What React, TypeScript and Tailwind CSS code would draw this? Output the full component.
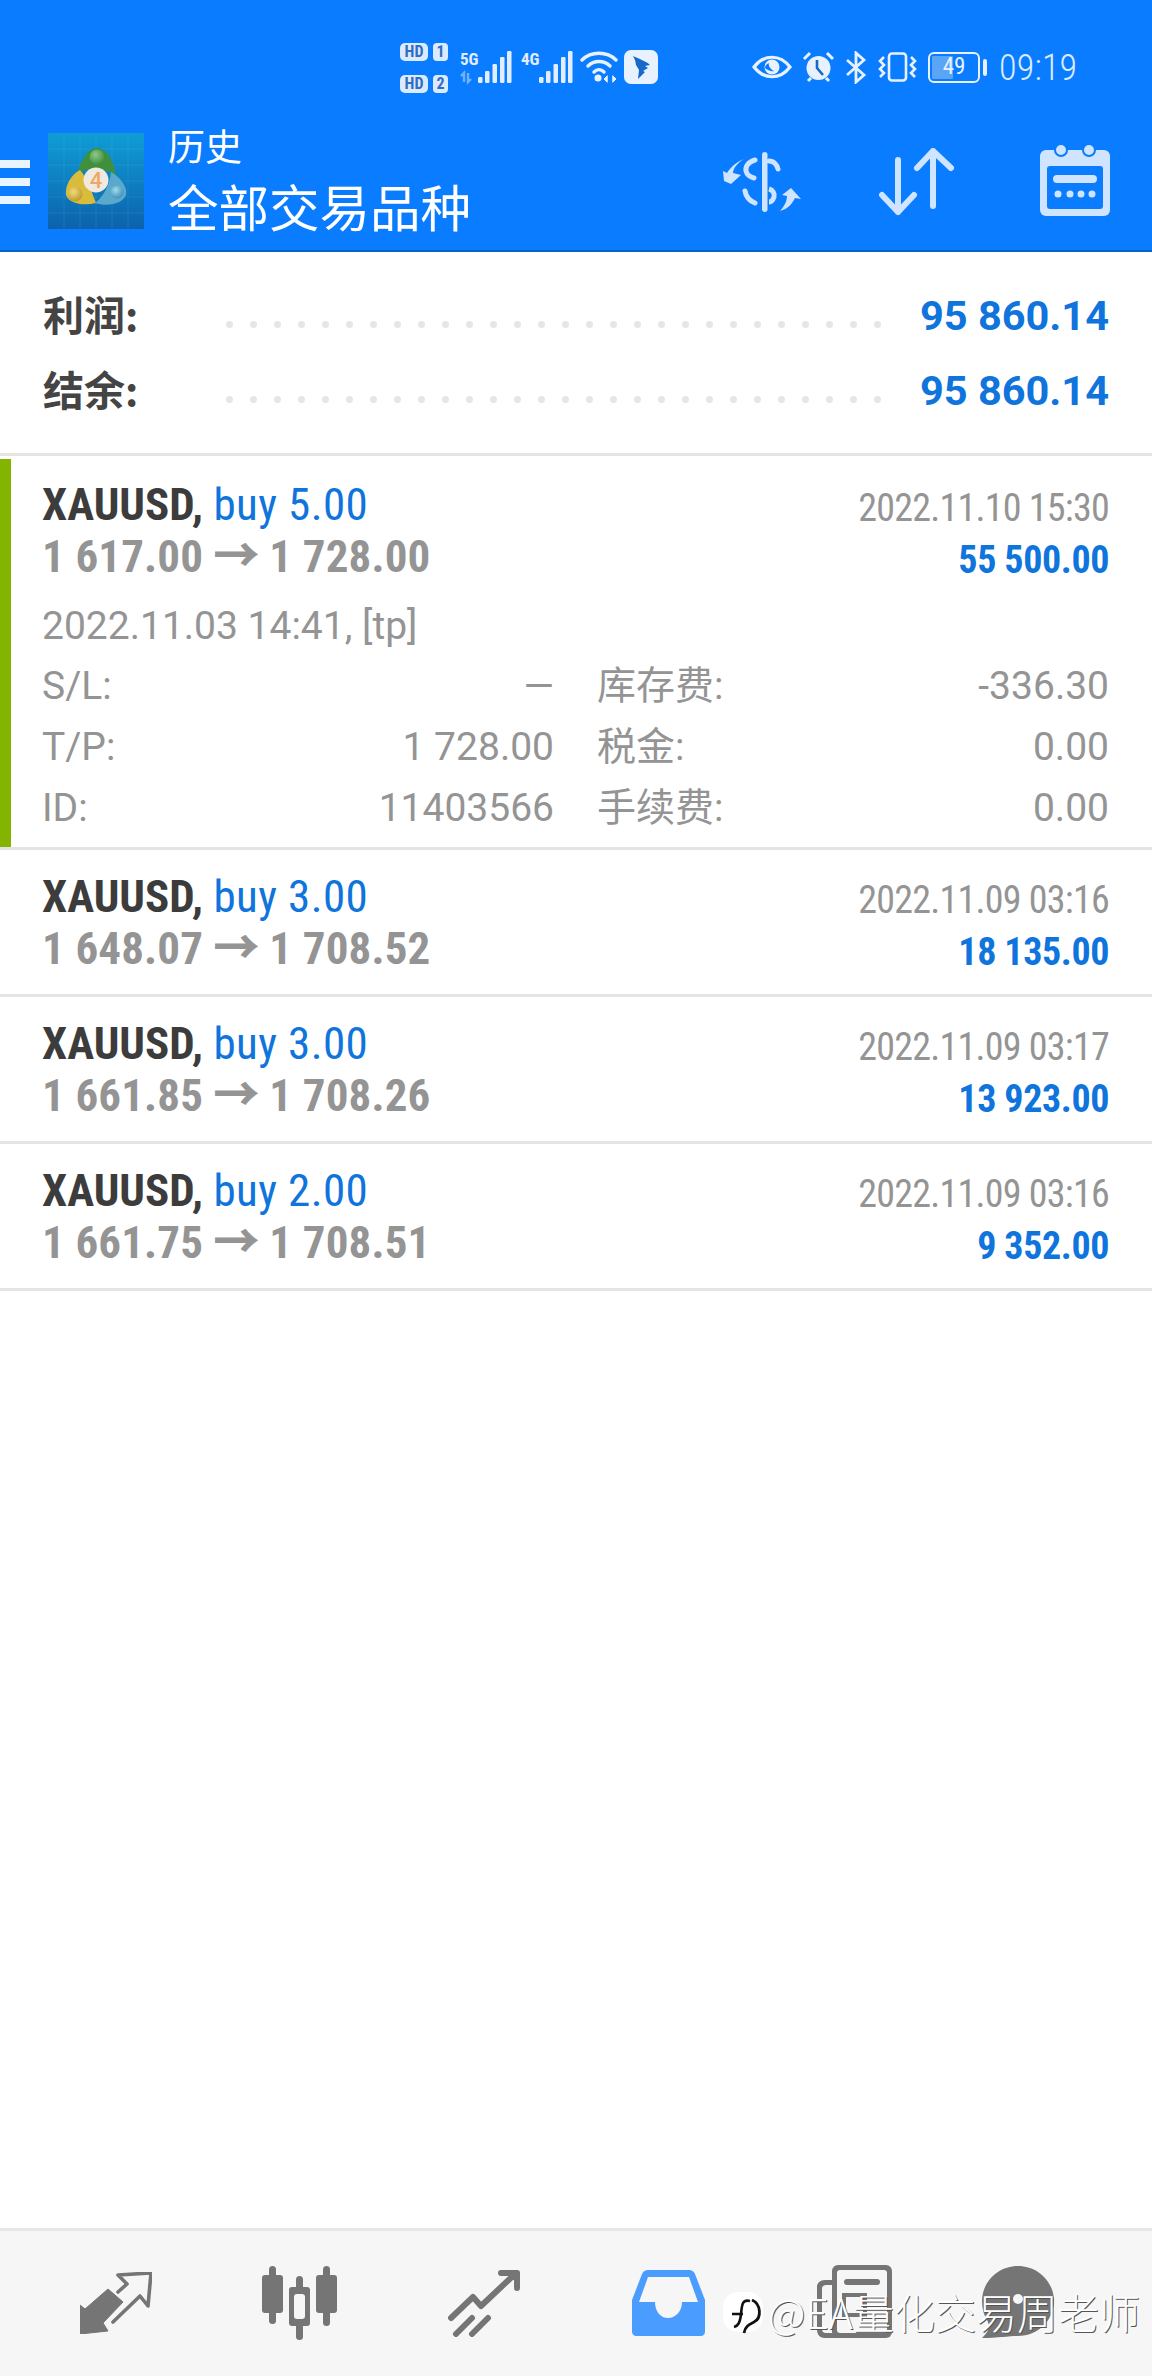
import React from "react";

const zh = "font-['Noto_Sans_CJK_SC','Noto_Sans',sans-serif]";
const rb = "font-['Roboto','Noto_Sans_CJK_SC',sans-serif]";

function HD({ n }: { n: string }) {
  return (
    <div className="flex gap-[5px] h-[18px] text-[#2f6fc0] text-[16px] leading-[18px] font-bold font-['Roboto',sans-serif] [font-stretch:85%]">
      <span className="w-[28px] bg-[#dceaff] rounded-[5px] text-center">HD</span>
      <span className="w-[15px] bg-[#dceaff] rounded-[4px] text-center">{n}</span>
    </div>
  );
}

function Signal({ label, sub }: { label: string; sub?: boolean }) {
  return (
    <div className="relative w-[60px] h-[36px] mt-[-1px] shrink-0">
      <span className="absolute left-[5px] top-[2px] text-[17px] leading-[16px] font-bold text-[#e2eeff] font-['Roboto',sans-serif] [font-stretch:75%]">{label}</span>
      <svg className="absolute left-0 top-0" width="60" height="36" viewBox="0 0 60 36" fill="#e2eeff">
        {sub && <path d="M9 33V24L6 27M13 24V33L16 30" fill="none" stroke="#6fb2fb" strokeWidth="2.4" />}
        <rect x="23" y="28" width="4.5" height="6" rx="1.2" />
        <rect x="30" y="22" width="4.5" height="12" rx="1.2" />
        <rect x="37.5" y="15" width="4.5" height="19" rx="1.2" />
        <rect x="45" y="8" width="4.5" height="26" rx="1.2" />
        <rect x="52" y="2" width="4.5" height="32" rx="1.2" />
      </svg>
    </div>
  );
}

function StatusBar() {
  return (
    <div className="h-[122px] flex items-center pt-[12px] pl-[400px] text-[#e2eeff]">
      <div className="flex flex-col gap-[14px] w-[55px] shrink-0 mt-[2px]">
        <HD n="1" />
        <HD n="2" />
      </div>
      <Signal label="5G" sub />
      <div className="w-[1px]" />
      <Signal label="4G" />
      <svg className="ml-[4px] shrink-0" width="38" height="32" viewBox="0 0 38 32" fill="none" stroke="#e8f2ff" strokeWidth="3.4" strokeLinecap="round">
        <path d="M2 9C11 0 27 0 36 9" />
        <path d="M8 15C14 9 24 9 30 15" />
        <path d="M14 21C17 18 21 18 24 21" />
        <circle cx="18" cy="27" r="3.5" fill="#e8f2ff" stroke="none" />
        <path d="M27 25L24 28L27 31ZM33 25L36 28L33 31Z" fill="#e8f2ff" strokeWidth="1" />
      </svg>
      <svg className="ml-[6px] shrink-0" width="34" height="34" viewBox="0 0 34 34">
        <rect width="34" height="34" rx="7" fill="#e8f2ff" />
        <path d="M9 6C15 9 22 11 26 15L21 16L24 18L19 21L21 22L14 29L15 20L12 15L11 10Z" fill="#1769c9" />
      </svg>
      <svg className="ml-[94px] shrink-0" width="40" height="24" viewBox="0 0 40 24" fill="none" stroke="#e8f2ff" strokeWidth="3.2">
        <path d="M2 12C12 -1 28 -1 38 12C28 25 12 25 2 12Z" />
        <circle cx="20" cy="12" r="7.5" fill="#e8f2ff" stroke="none" />
        <path d="M13 13C15 15 20 17 22 16C18 14 16 10 17 8C14 9 13 11 13 13Z" fill="#0a7cff" stroke="none" />
      </svg>
      <svg className="ml-[10px] shrink-0" width="33" height="32" viewBox="0 0 33 32" fill="#e8f2ff">
        <circle cx="16.5" cy="17" r="12" />
        <path d="M2 8L8 2M31 8L25 2M6 30L9 27M27 30L24 27" stroke="#e8f2ff" strokeWidth="3" />
        <path d="M15 9V17L21 24" stroke="#1769c9" strokeWidth="2.6" fill="none" />
      </svg>
      <svg className="ml-[10px] shrink-0" width="22" height="33" viewBox="0 0 22 33" fill="none" stroke="#e8f2ff" strokeWidth="2.8">
        <path d="M2 9L19 24L11 31V2L19 9L2 24" />
      </svg>
      <svg className="ml-[11px] shrink-0" width="39" height="30" viewBox="0 0 39 30" fill="none" stroke="#e8f2ff" strokeWidth="2.6">
        <rect x="11" y="1.5" width="17" height="27" rx="3" />
        <path d="M6 5L2 9L6 13L2 17L6 21L2 25M33 5L37 9L33 13L37 17L33 21L37 25" />
      </svg>
      <div className="ml-[11px] shrink-0 relative w-[52px] h-[31px] border-[2.6px] border-[#e8f2ff] rounded-[6px] overflow-hidden">
        <div className="absolute left-[2px] top-[2px] bottom-[2px] w-[21px] bg-[#5aa5f5] rounded-[1px]" />
        <span className="absolute inset-0 text-center text-[23px] leading-[26px] font-['Roboto',sans-serif] [font-stretch:85%] text-[#e8f2ff]">49</span>
      </div>
      <div className="ml-[3px] shrink-0 w-[4px] h-[17px] bg-[#e8f2ff] rounded-[2px]" />
      <span className={`ml-[12px] mt-[2px] text-[36px] leading-[40px] font-light ${rb} [font-stretch:85%] text-[#dcecff] tracking-[0.2px]`}>09:19</span>
    </div>
  );
}

function Logo() {
  return (
    <svg className="ml-[18px] mt-[-10px] shrink-0" width="96" height="96" viewBox="0 0 96 96">
      <defs>
        <linearGradient id="lg" x1="0" y1="0" x2="0" y2="1">
          <stop offset="0" stopColor="#0f9dd6" />
          <stop offset="1" stopColor="#0c62ac" />
        </linearGradient>
        <radialGradient id="gh" cx="0.4" cy="0.35" r="0.7">
          <stop offset="0" stopColor="#8dc98a" />
          <stop offset="1" stopColor="#3e8c3c" />
        </radialGradient>
        <radialGradient id="yh" cx="0.4" cy="0.35" r="0.7">
          <stop offset="0" stopColor="#f1dc78" />
          <stop offset="1" stopColor="#b9962a" />
        </radialGradient>
        <radialGradient id="bh" cx="0.4" cy="0.35" r="0.7">
          <stop offset="0" stopColor="#9fdcec" />
          <stop offset="1" stopColor="#3b8db6" />
        </radialGradient>
      </defs>
      <rect width="96" height="96" fill="url(#lg)" />
      <path d="M16 0V96M32 0V96M48 0V96M64 0V96M80 0V96M0 16H96M0 32H96M0 48H96M0 64H96M0 80H96" stroke="#ffffff" strokeOpacity="0.07" />
      <path d="M30 40C32 29 40 15 49 15C59 15 66 29 68 42C60 36 38 35 30 40Z" fill="#3f8f3c" />
      <circle cx="49" cy="24" r="7.5" fill="url(#gh)" />
      <path d="M32 37C23 42 17 52 18 62C21 71 36 73 48 70C44 60 40 46 32 37Z" fill="#d9bd3a" />
      <circle cx="27" cy="61" r="7.5" fill="url(#yh)" />
      <path d="M63 39C72 44 80 54 78 62C74 71 60 74 47 70C55 64 62 52 63 39Z" fill="#5aa9cc" />
      <circle cx="69" cy="59" r="6.5" fill="url(#bh)" />
      <circle cx="48" cy="47" r="12.5" fill="#f0e9e2" />
      <text x="48" y="55" textAnchor="middle" fontSize="22" fontWeight="500" fill="#eda862" fontFamily="Roboto">4</text>
    </svg>
  );
}

function NavBar() {
  return (
    <div className="h-[130px] flex items-center border-b-[2px] border-[#0a62c4]">
      <div className="flex flex-col gap-[10px] w-[30px] mt-[-8px] shrink-0">
        <div className="h-[8px] bg-[#e8f4ff]" />
        <div className="h-[8px] bg-[#e8f4ff]" />
        <div className="h-[8px] bg-[#e8f4ff]" />
      </div>
      <Logo />
      <div className={`ml-[24px] text-white ${zh} mt-[-8px]`}>
        <div className="text-[37px] leading-[44px] mt-[-7px]">历史</div>
        <div className="text-[50.5px] leading-[60px] mt-[8px] whitespace-nowrap">全部交易品种</div>
      </div>
      <svg className="ml-auto mt-[-8px] shrink-0" width="80" height="62" viewBox="12 7 80 62" fill="#cfe4ff">
        <rect x="52" y="8" width="5.5" height="60" rx="2.75" />
        <path d="M59 17C64 17 67 21 68 25" fill="none" stroke="#cfe4ff" strokeWidth="5" strokeLinecap="round" />
        <path d="M45 16C38 18 35 23 36 27C37 31 40 33 44 34" fill="none" stroke="#cfe4ff" strokeWidth="5" strokeLinecap="round" />
        <path d="M35 47C36 53 40 57 45 59" fill="none" stroke="#cfe4ff" strokeWidth="5" strokeLinecap="round" />
        <path d="M59 45C63 46 65 50 64 53C63 56 61 58 59 58" fill="none" stroke="#cfe4ff" strokeWidth="5" />
        <path d="M34 15C27 19 23 25 23 29L31 31L21 40L14 37L13 27L17 29C20 24 26 18 34 15Z" />
        <path d="M70 67C75 62 77 56 77 52L72 51L81 44L91 55L85 54C82 60 78 65 70 67Z" />
      </svg>
      <svg className="ml-[77px] mt-[-8px] shrink-0" width="76" height="68" viewBox="0 0 76 68" fill="none" stroke="#cfe4ff" strokeWidth="6" strokeLinecap="round" strokeLinejoin="round">
        <path d="M19 12V64M3 47L19 64L35 47" />
        <path d="M54 3V58M38 20L54 3L72 20" />
      </svg>
      <svg className="ml-[85px] mr-[42px] mt-[-14px] shrink-0" width="70" height="74" viewBox="0 0 70 74">
        <path d="M6 8H64A6 6 0 0 1 70 14V68A6 6 0 0 1 64 74H6A6 6 0 0 1 0 68V14A6 6 0 0 1 6 8Z" fill="#cfe4ff" />
        <rect x="7" y="24" width="56" height="43" rx="3" fill="#0a7cff" />
        <circle cx="21" cy="8" r="6" fill="#cfe4ff" stroke="#0a7cff" strokeWidth="2" />
        <circle cx="49" cy="8" r="6" fill="#cfe4ff" stroke="#0a7cff" strokeWidth="2" />
        <rect x="13" y="33" width="44" height="8" rx="4" fill="#cfe4ff" />
        <circle cx="18" cy="52" r="3.5" fill="#cfe4ff" /><circle cx="30" cy="52" r="3.5" fill="#cfe4ff" /><circle cx="41" cy="52" r="3.5" fill="#cfe4ff" /><circle cx="52" cy="52" r="3.5" fill="#cfe4ff" />
      </svg>
    </div>
  );
}

function SummaryRow({ label, value }: { label: string; value: string }) {
  return (
    <div className="h-[75px] flex items-center pl-[43px] pr-[43px]">
      <span className={`w-[183px] shrink-0 text-[41px] leading-[75px] font-bold text-[#444] ${zh}`}>{label}</span>
      <div className="w-[655px] shrink-0 flex gap-[17px] mt-[22px] overflow-hidden">
        {Array.from({ length: 28 }).map((_, i) => (
          <div key={i} className="w-[7px] h-[7px] shrink-0 rounded-full bg-[#e6e6e6]" />
        ))}
      </div>
      <span className={`ml-auto mt-[5px] text-[41.5px] font-bold text-[#0f74dc] ${rb} whitespace-nowrap`}>{value}</span>
    </div>
  );
}

function Head({ sym, lots, price1, price2, date, profit }: { sym: string; lots: string; price1: string; price2: string; date: string; profit: string }) {
  return (
    <div className="flex justify-between">
      <div>
        <div className={`text-[45px] leading-[52px] ${rb} [font-stretch:75%] whitespace-nowrap`}>
          <span className="font-bold text-[#3c3c3c]">{sym}, </span>
          <span className="text-[#0f74dc] tracking-[0.4px]">{lots}</span>
        </div>
        <div className={`text-[45px] leading-[52px] font-bold text-[#949494] ${rb} [font-stretch:75%] tracking-[0.15px] whitespace-nowrap`}>
          {price1} <span className="[-webkit-text-stroke:1px_#949494]">→</span> {price2}
        </div>
      </div>
      <div className={`text-right ${rb} [font-stretch:75%] whitespace-nowrap pt-[3px]`}>
        <div className="text-[38px] leading-[52px] text-[#949494] tracking-[-0.75px]">{date}</div>
        <div className="text-[38px] leading-[52px] font-bold text-[#0f74dc] tracking-[-0.4px]">{profit}</div>
      </div>
    </div>
  );
}

function Detail({ l1, v1, l2, v2 }: { l1: string; v1: string; l2: string; v2: string }) {
  return (
    <div className={`h-[61px] flex items-center text-[39px] text-[#949494] ${rb} whitespace-nowrap`}>
      <div className="w-[512px] flex justify-between"><span>{l1}</span><span>{v1}</span></div>
      <div className="ml-[43px] flex-1 flex justify-between"><span>{l2}</span><span>{v2}</span></div>
    </div>
  );
}

function TradeRow({ sym, lots, price1, price2, date, profit }: { sym: string; lots: string; price1: string; price2: string; date: string; profit: string }) {
  return (
    <div className="h-[147px] border-b-[3px] border-[#e4e4e4] pl-[42px] pr-[43px] pt-[21px]">
      <Head sym={sym} lots={lots} price1={price1} price2={price2} date={date} profit={profit} />
    </div>
  );
}

function Footer() {
  return (
    <div className="h-[148px] border-t-[3px] border-[#e6e6e6] bg-[#f6f6f6] flex items-center pl-[80px] pb-px">
      <svg className="shrink-0" width="72" height="62" viewBox="0 0 72 62" fill="#757575">
        <path d="M0 33L5 37L28 17L43 30L23 51L28 59L0 62Z" stroke="#757575" strokeWidth="1" strokeLinejoin="round" />
        <path d="M38 20L47 12L38 3L71 1L68 34L60 24L33 50" fill="none" stroke="#757575" strokeWidth="3.6" strokeLinejoin="round" strokeLinecap="round" />
      </svg>
      <svg className="ml-[110px] shrink-0" width="75" height="74" viewBox="0 0 75 74" fill="#757575">
        <rect x="0" y="9" width="21" height="38" rx="3" /><rect x="7" y="0" width="7" height="58" rx="3.5" />
        <rect x="54" y="9" width="21" height="38" rx="3" /><rect x="61" y="0" width="7" height="60" rx="3.5" />
        <rect x="34" y="10" width="7" height="64" rx="3.5" />
        <rect x="27" y="21" width="21" height="39" rx="3" />
        <rect x="32" y="28" width="11" height="25" rx="3" fill="#f6f6f6" />
      </svg>
      <svg className="ml-[111px] shrink-0" width="72" height="67" viewBox="0 0 72 67" fill="none" stroke="#757575" strokeWidth="6" strokeLinecap="round" strokeLinejoin="round">
        <path d="M3 48L25 27L33 36L68 3M53 3H69V18" />
        <path d="M8 64L24 48M24 64L40 48" />
      </svg>
      <svg className="ml-[112px] shrink-0" width="73" height="66" viewBox="0 0 73 66">
        <path d="M16 0H57C60 0 62 2 63 4L73 30V62C73 64 71 66 69 66H4C2 66 0 64 0 62V30L10 4C11 2 13 0 16 0Z" fill="#4a9dff" />
        <path d="M16 7H57L66 32H50C50 42 43 48 36 48C29 48 23 42 23 32H7Z" fill="#f6f6f6" />
      </svg>
      <svg className="ml-[112px] mt-[-3px] shrink-0" width="75" height="73" viewBox="0 0 75 73" fill="#757575">
        <rect x="15" y="0" width="60" height="73" rx="6" />
        <rect x="20" y="5" width="50" height="63" rx="3" fill="#f6f6f6" />
        <path d="M15 15H8C3 15 0 18 0 22V64C0 70 3 73 8 73H20V68H9C6 68 5 66 5 64V24C5 21 7 20 9 20H15Z" />
        <rect x="27" y="14" width="36" height="6" rx="3" />
        <path d="M27 30H48V50H27Z" fill="none" stroke="#757575" strokeWidth="4" />
      </svg>
      <svg className="ml-[90px] mt-[-3px] shrink-0" width="72" height="72" viewBox="0 0 72 72" fill="#757575">
        <path d="M36 0C56 0 72 16 72 35C72 54 56 70 36 70C26 70 16 72 0 72C6 66 8 62 6 56C2 50 0 43 0 35C0 16 16 0 36 0Z" />
        <circle cx="36" cy="33" r="5" fill="#f6f6f6" />
      </svg>
    </div>
  );
}

export default function App() {
  return (
    <div className="relative w-[1152px] h-[2376px] bg-white flex flex-col overflow-hidden">
      <div className="bg-[#0a7cff]">
        <StatusBar />
        <NavBar />
      </div>
      <div className="pt-[24px] h-[204px] border-b-[3px] border-[#e4e4e4]">
        <SummaryRow label="利润:" value="95 860.14" />
        <SummaryRow label="结余:" value="95 860.14" />
      </div>
      <div className="h-[394px] border-b-[3px] border-[#e4e4e4] pt-[3px]">
        <div className="h-full flex">
          <div className="w-[11px] shrink-0 bg-[#82b400]" />
          <div className="flex-1 pl-[31px] pr-[43px] pt-[20px]">
            <Head sym="XAUUSD" lots="buy 5.00" price1="1 617.00" price2="1 728.00" date="2022.11.10 15:30" profit="55 500.00" />
            <div className={`mt-[10px] h-[60px] flex items-center text-[39px] text-[#949494] ${rb}`}>2022.11.03 14:41, [tp]</div>
            <Detail l1="S/L:" v1="—" l2="库存费:" v2="-336.30" />
            <Detail l1="T/P:" v1="1 728.00" l2="税金:" v2="0.00" />
            <Detail l1="ID:" v1="11403566" l2="手续费:" v2="0.00" />
          </div>
        </div>
      </div>
      <TradeRow sym="XAUUSD" lots="buy 3.00" price1="1 648.07" price2="1 708.52" date="2022.11.09 03:16" profit="18 135.00" />
      <TradeRow sym="XAUUSD" lots="buy 3.00" price1="1 661.85" price2="1 708.26" date="2022.11.09 03:17" profit="13 923.00" />
      <TradeRow sym="XAUUSD" lots="buy 2.00" price1="1 661.75" price2="1 708.51" date="2022.11.09 03:16" profit="9 352.00" />
      <div className="flex-1" />
      <Footer />
      <div className="absolute left-[723px] top-[2288px] flex items-center">
        <svg width="42" height="48" viewBox="0 0 42 48">
          <rect x="0" y="4" width="40" height="40" rx="15" fill="#fff" />
          <path d="M9 26H20M27 13C19 11 19 17 18 26C17 35 15 38 11 39" fill="none" stroke="#111" strokeWidth="2.6" />
          <path d="M29 12C38 16 39 30 31 34C27 36 22 38 21 45" fill="none" stroke="#111" strokeWidth="2.8" />
        </svg>
        <span className={`ml-[3px] mt-[-2px] text-[41px] leading-[46px] text-white whitespace-nowrap font-light ${zh} [text-shadow:1px_1px_0_#555]`}>@EA量化交易周老师</span>
      </div>
    </div>
  );
}
